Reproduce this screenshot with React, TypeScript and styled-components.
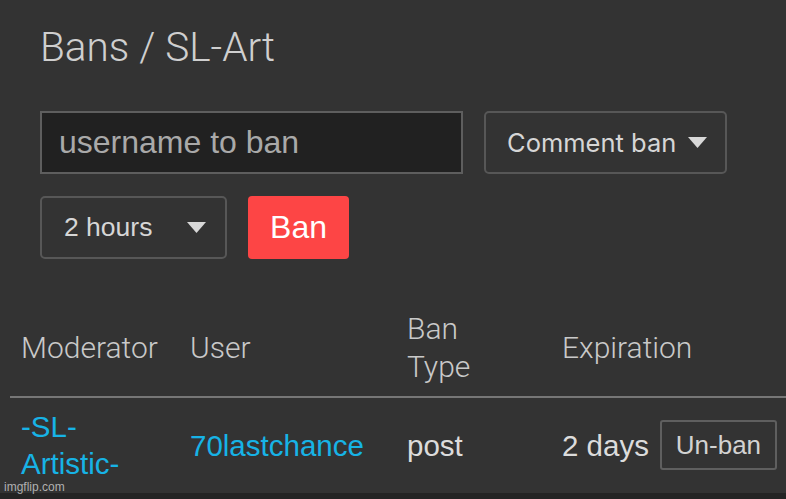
import styled, { createGlobalStyle } from 'styled-components';

const GlobalStyle = createGlobalStyle`
  html, body {
    margin: 0;
    padding: 0;
    background: #333333;
    height: 499px;
    overflow: hidden;
  }
  * {
    box-sizing: border-box;
  }
`;

const LIGHT = `'Roboto', 'Liberation Sans', sans-serif`;
const SANS = `'Liberation Sans', Arial, sans-serif`;

const bans = [
  { moderator: '-SL-\nArtistic-', user: '70lastchance', type: 'post', expiration: '2 days' },
];

const Caret = () => (
  <svg width="19" height="11" viewBox="0 0 19 11">
    <path d="M0 0 L19 0 L9.5 11 Z" fill="#d8d8d8" />
  </svg>
);

export default function App() {
  return (
    <Page>
      <GlobalStyle />
      <Header>
        <Title>Bans / SL-Art</Title>
        <FormRow>
          <UserInput placeholder="username to ban" />
          <Select $width={243} $font="'Inter', sans-serif" $size={25.5}>
            <span>Comment ban</span>
            <Caret />
          </Select>
        </FormRow>
        <FormRow>
          <Select $width={187} $font={SANS} $size={26.5} $spread>
            <span>2 hours</span>
            <Caret />
          </Select>
          <BanButton>Ban</BanButton>
        </FormRow>
      </Header>

      <Table>
        <thead>
          <tr>
            <Th $width={169}>Moderator</Th>
            <Th $width={217}>User</Th>
            <Th $width={155}>
              Ban
              <br />
              Type
            </Th>
            <Th>Expiration</Th>
          </tr>
        </thead>
        <tbody>
          {bans.map(b => (
            <tr key={b.user}>
              <Td>
                <Link $multiline>{b.moderator}</Link>
              </Td>
              <Td>
                <Link>{b.user}</Link>
              </Td>
              <Td>{b.type}</Td>
              <Td>
                <Expiry>
                  {b.expiration}
                  <UnbanButton>Un-ban</UnbanButton>
                </Expiry>
              </Td>
            </tr>
          ))}
        </tbody>
      </Table>

      <Footer />
      <Watermark>imgflip.com</Watermark>
    </Page>
  );
}

const Page = styled.div`
  position: relative;
  width: 786px;
  height: 499px;
  overflow: hidden;
  background: #333333;
`;

const Header = styled.div`
  padding: 0 0 0 40px;
  display: flex;
  flex-direction: column;
  gap: 22px;
`;

const Title = styled.h1`
  margin: 24px 0 19px 0;
  font-family: ${LIGHT};
  font-weight: 300;
  font-size: 40.5px;
  line-height: 46px;
  color: #cfcfcf;
`;

const FormRow = styled.div`
  display: flex;
  gap: 21px;
  align-items: center;
`;

const UserInput = styled.input`
  width: 423px;
  height: 63px;
  background: #212121;
  border: 2px solid #5e5e5e;
  padding: 0 17px;
  font-family: ${SANS};
  font-size: 32px;
  color: #ddd;
  outline: none;
  &::placeholder {
    color: #a9a9a9;
  }
`;

const Select = styled.div<{ $width: number; $font: string; $size: number; $spread?: boolean }>`
  width: ${p => p.$width}px;
  height: 63px;
  border: 2px solid #575757;
  border-radius: 5px;
  display: flex;
  align-items: center;
  justify-content: ${p => (p.$spread ? 'space-between' : 'flex-start')};
  gap: 12px;
  padding: 0 0 0 ${p => (p.$spread ? 22 : 21)}px;
  padding-right: ${p => (p.$spread ? 19 : 0)}px;
  font-family: ${p => p.$font};
  font-size: ${p => p.$size}px;
  color: #d6d6d6;
  white-space: nowrap;
  span {
    line-height: 1;
    flex-shrink: 0;
  }
  svg {
    flex-shrink: 0;
  }
`;

const BanButton = styled.button`
  width: 101px;
  height: 63px;
  border: none;
  border-radius: 4px;
  background: #fd4545;
  color: #fff;
  font-family: ${SANS};
  font-size: 32px;
  padding: 0;
`;

const Table = styled.table`
  margin: 49px 0 0 10px;
  width: 776px;
  border-collapse: collapse;
`;

const Th = styled.th<{ $width?: number }>`
  width: ${p => (p.$width ? `${p.$width}px` : 'auto')};
  text-align: left;
  vertical-align: middle;
  padding: 2px 0 10px 11px;
  font-family: ${LIGHT};
  font-weight: 300;
  font-size: 30px;
  line-height: 38px;
  color: #c9c9c9;
  border-bottom: 2px solid #777777;
  white-space: nowrap;
`;

const Td = styled.td`
  padding: 10px 0 0 11px;
  vertical-align: middle;
  font-family: ${SANS};
  font-size: 29.5px;
  line-height: 37px;
  color: #dcdcdc;
  white-space: nowrap;
`;

const Link = styled.span<{ $multiline?: boolean }>`
  color: #17b3e6;
  white-space: ${p => (p.$multiline ? 'pre-line' : 'nowrap')};
`;

const Expiry = styled.div`
  display: flex;
  align-items: center;
  gap: 11px;
`;

const UnbanButton = styled.button`
  width: 117px;
  height: 50px;
  background: #333;
  border: 2px solid #5f5f5f;
  border-radius: 3px;
  color: #d2d2d2;
  font-family: ${SANS};
  font-size: 26px;
  padding: 0;
`;

const Footer = styled.div`
  position: absolute;
  left: 0;
  right: 0;
  bottom: 0;
  height: 6px;
  background: #242424;
`;

const Watermark = styled.div`
  position: absolute;
  left: 4px;
  bottom: 5px;
  font-family: ${SANS};
  font-size: 12px;
  color: rgba(220, 220, 220, 0.75);
`;
